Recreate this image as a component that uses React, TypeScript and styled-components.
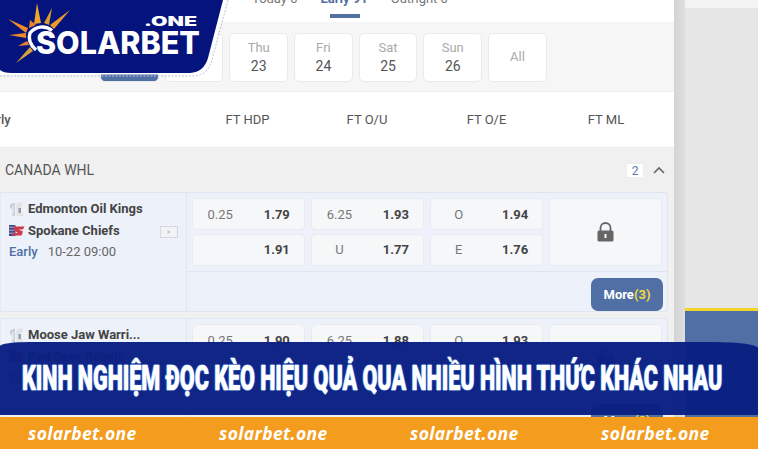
import React from "react";
import styled, { createGlobalStyle } from "styled-components";

const Global = createGlobalStyle`
  html, body { margin: 0; padding: 0; background: #fff; }
  #root { width: 758px; height: 450px; }
  * { box-sizing: border-box; }
`;

const Page = styled.div`
  position: relative;
  width: 758px;
  height: 450px;
  overflow: hidden;
  display: flex;
  font-family: Roboto, "Liberation Sans", sans-serif;
  color: #555;
`;
const Main = styled.main`
  width: 674px;
  flex: none;
  display: flex;
  flex-direction: column;
`;
const Scrollbar = styled.div`
  width: 11px;
  flex: none;
  background: linear-gradient(90deg, #d4d4d4, #dedede);
`;
const Side = styled.aside`
  flex: 1;
  display: flex;
  flex-direction: column;
  background: #e6e6e6;
  padding-top: 8px;
  box-shadow: inset 0 8px 0 #f3f3f3;
`;
const SideBlank = styled.div`
  height: 300px;
  flex: none;
`;
const SideBlue = styled.div`
  flex: 1;
  background: #4f6fa5;
  border-top: 3px solid #f4d52b;
`;

const TabBar = styled.nav`
  height: 22px;
  flex: none;
  display: flex;
  align-items: flex-end;
  padding-left: 252px;
  gap: 23px;
  background: #fff;
  overflow: hidden;
`;
const Tab = styled.div<{ $on?: boolean }>`
  position: relative;
  height: 30px;
  line-height: 14px;
  font-size: 13px;
  font-weight: ${(p) => (p.$on ? 700 : 400)};
  color: ${(p) => (p.$on ? "#4f6fa5" : "#777")};
  white-space: nowrap;
  &::after {
    content: "";
    display: ${(p) => (p.$on ? "block" : "none")};
    position: absolute;
    left: 9px;
    right: 8px;
    bottom: 4px;
    height: 4px;
    background: #4f6fa5;
  }
`;

const DateStrip = styled.div`
  height: 70px;
  flex: none;
  padding: 11px 0 0 100px;
  display: flex;
  gap: 6px;
  align-items: flex-start;
  background: #f6f6f6;
  border-bottom: 1px solid #ececec;
`;
const DateCard = styled.div<{ $on?: boolean }>`
  width: 58.7px;
  height: 48.5px;
  border-radius: 5px;
  background: ${(p) => (p.$on ? "#4f6fa5" : "#fff")};
  border: 1px solid #eaeaea;
  display: flex;
  flex-direction: column;
  align-items: center;
  justify-content: center;
  line-height: 18px;
`;
const DayName = styled.span`
  font-size: 13px;
  color: #aaa;
`;
const DayNum = styled.span`
  font-size: 14px;
  color: #555;
`;

const ColGrid = styled.div`
  display: grid;
  grid-template-columns: 185px repeat(4, 114px);
  column-gap: 5.5px;
`;
const HeaderRow = styled(ColGrid)`
  height: 56px;
  flex: none;
  background: #fff;
  align-items: center;
  border-bottom: 1px solid #ececec;
  font-size: 13px;
  color: #555;
  overflow: hidden;
`;
const HeadLabel = styled.div`
  text-align: center;
`;
const LeagueLabel = styled.div`
  margin-left: -18px;
  font-weight: 500;
`;

const LeagueRow = styled.div`
  height: 44px;
  flex: none;
  background: #f0f0f0;
  display: flex;
  align-items: center;
  padding: 0 9px 0 5px;
  font-size: 14px;
  color: #555;
`;
const LeagueName = styled.div`
  flex: 1;
`;
const Count = styled.div`
  width: 18px;
  height: 15px;
  background: #fff;
  border-radius: 2px;
  border: 1px solid #eee;
  color: #5a76ad;
  font-size: 12px;
  line-height: 14px;
  text-align: center;
  margin-right: 9px;
`;

const Matches = styled.div`
  flex: 1;
  background: #f0f0f0;
  display: flex;
  flex-direction: column;
  gap: 6px;
  padding-right: 6px;
`;
const Match = styled.article`
  flex: none;
  height: 120px;
  display: grid;
  grid-template-columns: 186px 1fr;
  background: #edf1f9;
  border: 1px solid #e1e5ed;
  border-left-color: #e6e9f0;
  border-radius: 0 3px 3px 0;
`;
const TeamCol = styled.div`
  border-right: 1px solid #e1e5ed;
  padding: 5px 0 0 8px;
  position: relative;
`;
const Team = styled.div`
  height: 21.5px;
  display: flex;
  align-items: center;
  gap: 3px;
  font-size: 13px;
  font-weight: 700;
  color: #444;
  white-space: nowrap;
`;
const TimeLine = styled.div`
  height: 20px;
  display: flex;
  align-items: center;
  gap: 10px;
  font-size: 13px;
  color: #666;
`;
const Stage = styled.span`
  color: #4f6fa5;
  font-weight: 500;
`;
const PlayIcon = styled.svg`
  position: absolute;
  left: 159px;
  top: 33px;
`;
const OddsCol = styled.div`
  display: flex;
  flex-direction: column;
`;
const OddsArea = styled.div`
  height: 79px;
  padding: 5px 4.5px 0 4.5px;
  display: grid;
  grid-template-columns: repeat(4, 113px);
  grid-template-rows: 32px 32px;
  column-gap: 6.2px;
  row-gap: 3.5px;
  border-bottom: 1px solid #e1e5ed;
`;
const Cell = styled.div`
  background: #f6f7f9;
  border: 1px solid #e9ebf0;
  border-radius: 5px;
  display: grid;
  grid-template-columns: 1fr 1fr;
  align-items: center;
  font-size: 13px;
`;
const Handicap = styled.span`
  text-align: center;
  color: #777;
`;
const Price = styled.span`
  text-align: center;
  color: #444;
  font-weight: 700;
  margin-left: 2px;
`;
const LockCell = styled.div`
  grid-column: 4;
  grid-row: 1 / span 2;
  background: #f6f7f9;
  border: 1px solid #e9ebf0;
  border-radius: 5px;
  display: flex;
  align-items: center;
  justify-content: center;
`;
const MoreRow = styled.div`
  flex: 1;
  display: flex;
  justify-content: flex-end;
  padding: 6px 4px 0 0;
`;
const MoreButton = styled.button`
  width: 72px;
  height: 33px;
  border: 0;
  padding: 0;
  border-radius: 7px;
  background: #4f6fa5;
  color: #fff;
  font: 700 13px Roboto, sans-serif;
`;
const MoreCount = styled.span`
  color: #f2d93a;
`;

const LogoWrap = styled.div`
  position: absolute;
  left: 0;
  top: 0;
  width: 232px;
  height: 80px;
`;

const Footer = styled.footer`
  position: absolute;
  left: 0;
  right: 0;
  bottom: 0;
  display: flex;
  flex-direction: column;
`;
const Banner = styled.div`
  height: 73px;
  background: rgba(10, 32, 130, 0.975);
  border-radius: 30px 44px 0 0 / 4px 6px 0 0;
  display: flex;
  align-items: center;
  padding-left: 22px;
  overflow: hidden;
`;
const Headline = styled.h1`
  margin: 0;
  font: 900 35px/40px Roboto, "Liberation Sans", sans-serif;
  color: #fff;
  white-space: nowrap;
  transform-origin: left center;
  transform: scaleX(0.615);
  -webkit-text-stroke: 0.6px #fff;
  text-shadow: 0 0 2px #3f8af0, 0 0 2px #3f8af0;
`;
const Strip = styled.div`
  height: 33px;
  margin-top: 2px;
  border-bottom: 1px solid #fff;
  background: #f39c1e;
  display: flex;
  align-items: center;
  padding-left: 28px;
  gap: 79px;
`;
const Domain = styled.span`
  width: 112px;
  flex: none;
  font: italic 700 17.5px "Open Sans", sans-serif;
  letter-spacing: 0.35px;
  color: #fff;
  white-space: nowrap;
`;

const Shield = () => (
  <svg width="16" height="16" viewBox="0 0 16 16">
    <path d="M1 3.5L6 1.5V15H3.5L3 8 1 7z" fill="#c9ccd1" />
    <path d="M7.5 2.5L13 1l1 3-2 1.5V11l3 3-2 1H7.5z" fill="#e2e4e8" />
    <path d="M9.5 7h2.5v5H9.5z" fill="#9a9ea4" />
    <path d="M4 4.5v8" stroke="#eef0f3" strokeWidth="1.2" />
  </svg>
);
const Flag = () => (
  <svg width="16" height="13" viewBox="0 0 16 13">
    <rect x="0" y="1" width="6.5" height="11" fill="#3c4d8f" />
    <path d="M0 3.2h6.5M0 6.2h6.5M0 9.2h6.5" stroke="#c9a3bb" strokeWidth="1" />
    <path d="M5 2.5h10.5L14 5.5H9.5L14 7.5 12.5 11.5H3l1.2-2.5H9L5 6.5z" fill="#cf3a4c" />
  </svg>
);
const Lock = () => (
  <svg width="17" height="20" viewBox="0 0 17 20">
    <path d="M3.5 9.5V6a5 5 0 0 1 10 0v3.5" fill="none" stroke="#666" strokeWidth="1.8" />
    <rect x="0.5" y="8.5" width="16" height="11" rx="1.5" fill="#666" />
    <rect x="7.5" y="12" width="2" height="4" fill="#f6f7f9" />
  </svg>
);
const Chevron = () => (
  <svg width="12" height="8" viewBox="0 0 12 8">
    <path d="M1 7l5-5 5 5" fill="none" stroke="#666" strokeWidth="1.6" />
  </svg>
);
const Play = () => (
  <PlayIcon width="18" height="12" viewBox="0 0 18 12">
    <rect x="0.5" y="0.5" width="17" height="11" fill="#f1f3f7" stroke="#d4d7dc" />
    <path d="M7.5 4l3.5 2-3.5 2z" fill="#c6c9ce" />
  </PlayIcon>
);

const rays: [number, number, number, number, number, number, string][] = [
  [37, 3, 34, 24, 41, 23, "#f0a52b"],
  [52, 8, 44, 23, 49, 25, "#d99a2e"],
  [70, 10, 50, 25, 54, 29, "#ef9a2a"],
  [30, 20, 29, 28, 36, 25, "#e9862c"],
  [8, 19, 28, 28, 26, 33, "#ee8a28"],
  [9, 35, 26, 33, 26, 38, "#ee8a28"],
  [18, 46, 27, 41, 29, 45, "#e9862c"],
  [16, 63, 30, 47, 33, 51, "#d6a23a"],
];

const Logo = () => (
  <LogoWrap>
    <svg width="232" height="80" viewBox="0 0 232 80">
      <path
        d="M0 76L14 76H194Q208 75 212 60L228 0"
        fill="none"
        stroke="#b8c2dc"
        strokeWidth="1"
        strokeDasharray="2 1.5"
      />
      <path d="M0 74.5H194Q207 74 210.5 60L226 0H0z" fill="#fff" />
      <path d="M0 70Q3 73 12 73H190Q204 72 208 58L223 0H0z" fill="#05137d" />
      {rays.map(([a, b, c, d, e, f, col], i) => (
        <polygon key={i} points={`${a},${b} ${c},${d} ${e},${f}`} fill={col} />
      ))}
      <path
        d="M52 30.5A15.5 15.5 0 0 0 30 33Q27 42 36 50"
        fill="none"
        stroke="#fff"
        strokeWidth="3.4"
      />
      <text
        x="36"
        y="54"
        fill="#fff"
        fontFamily="Inter, 'Liberation Sans', sans-serif"
        fontWeight="800"
        fontSize="31"
        textLength="164"
        lengthAdjust="spacingAndGlyphs"
      >
        SOLARBET
      </text>
      <text
        x="144"
        y="26"
        fill="#fff"
        fontFamily="Inter, 'Liberation Sans', sans-serif"
        fontWeight="900"
        fontSize="13"
        textLength="53"
        lengthAdjust="spacingAndGlyphs"
      >
        .ONE
      </text>
    </svg>
  </LogoWrap>
);

const days = [
  ["Tue", "21"],
  ["Wed", "22"],
  ["Thu", "23"],
  ["Fri", "24"],
  ["Sat", "25"],
  ["Sun", "26"],
];

const games = [
  {
    home: "Edmonton Oil Kings",
    away: "Spokane Chiefs",
    when: "10-22 09:00",
    rows: [
      ["0.25", "1.79", "6.25", "1.93", "O", "1.94"],
      ["", "1.91", "U", "1.77", "E", "1.76"],
    ],
    more: 3,
  },
  {
    home: "Moose Jaw Warri...",
    away: "Red Deer Rebels",
    when: "10-22 09:00",
    rows: [
      ["0.25", "1.90", "6.25", "1.88", "O", "1.93"],
      ["", "1.81", "U", "1.82", "E", "1.77"],
    ],
    more: 3,
  },
];

const OddsCells = ({ row }: { row: string[] }) => (
  <>
    {[0, 2, 4].map((c) => (
      <Cell key={c}>
        <Handicap>{row[c]}</Handicap>
        <Price>{row[c + 1]}</Price>
      </Cell>
    ))}
  </>
);

export default function App() {
  return (
    <Page>
      <Global />
      <Main>
        <TabBar>
          <Tab>Today 0</Tab>
          <Tab $on>Early 91</Tab>
          <Tab>Outright 0</Tab>
        </TabBar>
        <DateStrip>
          {days.map(([d, n], i) => (
            <DateCard key={d} $on={i === 0}>
              <DayName>{d}</DayName>
              <DayNum>{n}</DayNum>
            </DateCard>
          ))}
          <DateCard>
            <DayName>All</DayName>
          </DateCard>
        </DateStrip>
        <HeaderRow>
          <LeagueLabel>Early</LeagueLabel>
          <HeadLabel>FT HDP</HeadLabel>
          <HeadLabel>FT O/U</HeadLabel>
          <HeadLabel>FT O/E</HeadLabel>
          <HeadLabel>FT ML</HeadLabel>
        </HeaderRow>
        <LeagueRow>
          <LeagueName>CANADA WHL</LeagueName>
          <Count>2</Count>
          <Chevron />
        </LeagueRow>
        <Matches>
          {games.map((g) => (
            <Match key={g.home}>
              <TeamCol>
                <Team>
                  <Shield />
                  {g.home}
                </Team>
                <Team>
                  <Flag />
                  {g.away}
                </Team>
                <TimeLine>
                  <Stage>Early</Stage>
                  {g.when}
                </TimeLine>
                <Play />
              </TeamCol>
              <OddsCol>
                <OddsArea>
                  <OddsCells row={g.rows[0]} />
                  <LockCell>
                    <Lock />
                  </LockCell>
                  <OddsCells row={g.rows[1]} />
                </OddsArea>
                <MoreRow>
                  <MoreButton>
                    More<MoreCount>({g.more})</MoreCount>
                  </MoreButton>
                </MoreRow>
              </OddsCol>
            </Match>
          ))}
        </Matches>
      </Main>
      <Scrollbar />
      <Side>
        <SideBlank />
        <SideBlue />
      </Side>
      <Logo />
      <Footer>
        <Banner>
          <Headline>KINH NGHIỆM ĐỌC KÈO HIỆU QUẢ QUA NHIỀU HÌNH THỨC KHÁC NHAU</Headline>
        </Banner>
        <Strip>
          <Domain>solarbet.one</Domain>
          <Domain>solarbet.one</Domain>
          <Domain>solarbet.one</Domain>
          <Domain>solarbet.one</Domain>
        </Strip>
      </Footer>
    </Page>
  );
}
